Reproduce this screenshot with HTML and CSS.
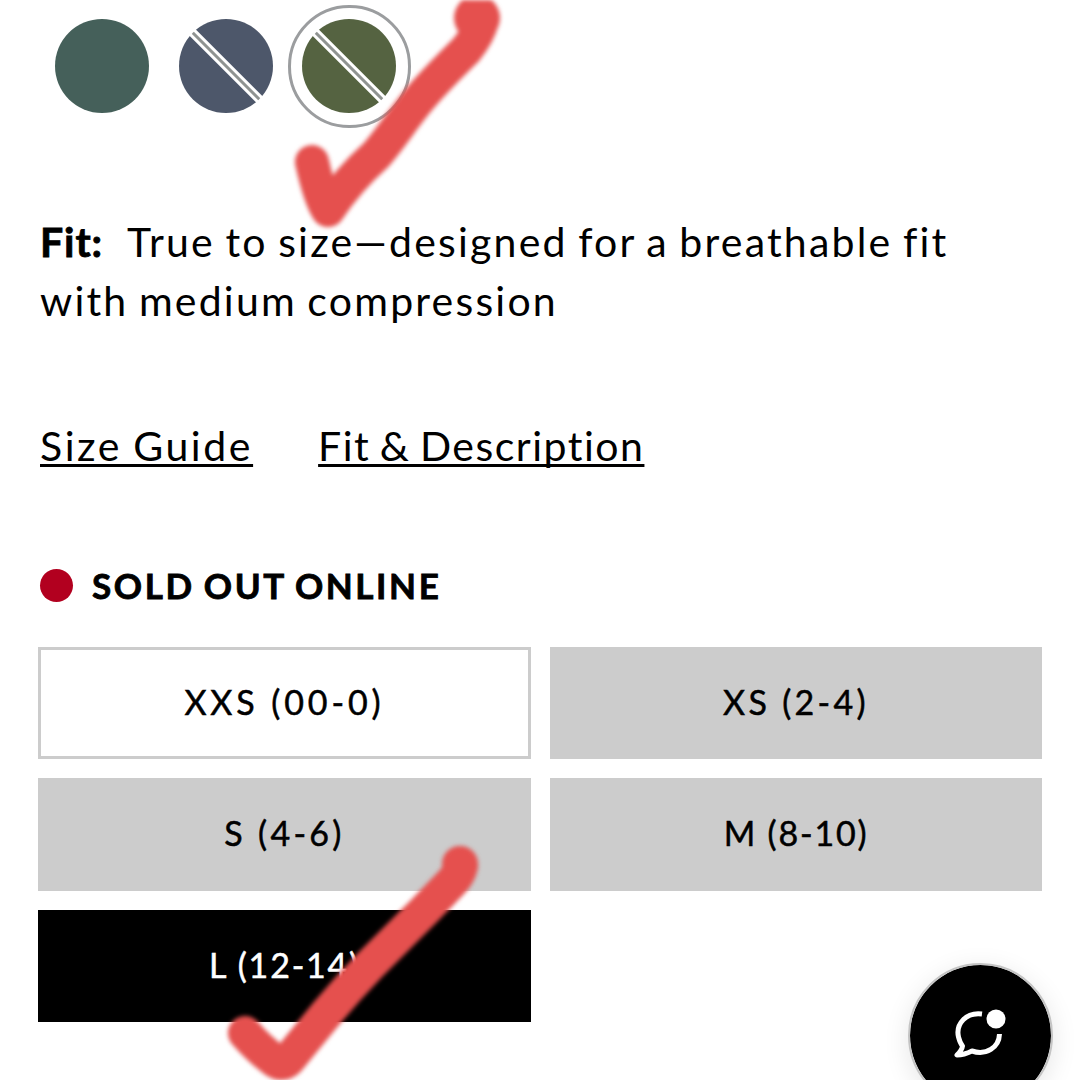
FILE: index.html
```html
<!DOCTYPE html>
<html lang="en">
<head>
  <meta charset="UTF-8">
  <meta name="viewport" content="width=device-width, initial-scale=1.0">
  <title>Product options</title>
  <link rel="stylesheet" href="styles.css">
</head>
<body>
  <main class="product">
    <div class="swatches">
      <button class="swatch" aria-label="Teal"><span class="color teal"></span></button>
      <button class="swatch" aria-label="Slate"><span class="color slate sold-out"></span></button>
      <button class="swatch selected" aria-label="Olive"><span class="color olive sold-out"></span></button>
    </div>

    <p class="fit"><strong>Fit:</strong>True to size—designed for a breathable fit<br>with medium compression</p>

    <nav class="links">
      <a href="#" class="guide">Size Guide</a>
      <a href="#" class="description">Fit &amp; Description</a>
    </nav>

    <div class="stock">
      <span class="dot"></span>
      <span class="stock-text">SOLD OUT ONLINE</span>
    </div>

    <div class="sizes">
      <button class="size available">XXS (00-0)</button>
      <button class="size small">XS (2-4)</button>
      <button class="size small">S (4-6)</button>
      <button class="size">M (8-10)</button>
      <button class="size active">L (12-14)</button>
    </div>
  </main>

  <!-- Hand drawn check marks -->
  <svg class="marks" viewBox="0 0 1080 1080">
    <path d="M482 20 Q479 34 466 50 C450 66 432 83 416 103 S390 139 376 155 Q348 180 328 210 Q320 198 312 162"/>
    <circle cx="477" cy="18" r="23"/>
    <path d="M461 866 Q459 875 451 883 L425 910 L370 965 Q347 989 326 1014 L290 1058 Q283 1067 274 1060 Q259 1049 245 1033"/>
    <circle cx="460" cy="864" r="18"/>
  </svg>

  <button class="chat" aria-label="Chat">
    <svg viewBox="0 0 52 50">
      <path class="bubble" d="M28 5 C12 3 1.500 15 4.500 28 Q6 34 8.500 37 Q8 41 3 46 Q10 46 18 42 C32 46.500 45 39 45.500 25"/>
      <circle cx="42" cy="10" r="9.500"/>
    </svg>
  </button>
</body>
</html>
```

FILE: styles.css
```css
* {
  box-sizing: border-box;
}
body {
  margin: 0;
  height: 1080px;
  overflow: hidden;
  position: relative;
  background: #fff;
  color: #000;
  font-family: Lato, 'Open Sans', sans-serif;
}
button {
  font-family: inherit;
  margin: 0;
  cursor: pointer;
}
.product {
  padding: 5px 38px 0;
}
.swatches {
  display: flex;
  gap: 1px;
  margin-left: 3px;
}
.swatch {
  display: flex;
  justify-content: center;
  align-items: center;
  width: 122.5px;
  height: 122.5px;
  padding: 0;
  border: 3px solid transparent;
  border-radius: 50%;
  background: none;
}
.swatch.selected {
  border-color: #9b9d9f;
}
.color {
  width: 94px;
  height: 94px;
  border-radius: 50%;
}
.teal {
  background: #45605a;
}
.slate {
  --shade: #4d576a;
}
.olive {
  --shade: #556341;
}
/* Diagonal strike for colors that are not available */
.sold-out {
  background: linear-gradient(45deg, var(--shade) calc(50% - 5px), #fff calc(50% - 4px), #fff calc(50% - 2px), #8f9391 calc(50% - 1px), #8f9391 calc(50% + 1px), #fff calc(50% + 2px), #fff calc(50% + 4px), var(--shade) calc(50% + 5px));
}
.fit {
  margin: 84.5px 0 0 2px;
  font-size: 41px;
  line-height: 59px;
  letter-spacing: 2.2px;
  word-spacing: -2.2px;
  white-space: nowrap;
}
.fit strong {
  margin-right: 24px;
  letter-spacing: 0.9px;
  -webkit-text-stroke: 0.8px currentColor;
}
.links {
  display: flex;
  gap: 65px;
  margin: 86px 0 0 2px;
  font-size: 41px;
  line-height: 59px;
}
.links a {
  color: inherit;
  text-decoration: underline;
  text-decoration-thickness: 3px;
  text-underline-offset: 3px;
  text-decoration-skip-ink: none;
}
.guide {
  letter-spacing: 2.6px;
  word-spacing: -2px;
}
.description {
  letter-spacing: 1.5px;
  word-spacing: -2.5px;
}
.stock {
  display: flex;
  align-items: center;
  gap: 19px;
  height: 60px;
  margin: 80.5px 0 0 2px;
}
.dot {
  width: 33px;
  height: 33px;
  border-radius: 50%;
  background: #b2001f;
}
.stock-text {
  padding-bottom: 2px;
  font-size: 35px;
  font-weight: bold;
  letter-spacing: 2.6px;
  word-spacing: -2px;
  -webkit-text-stroke: 0.8px currentColor;
}
.sizes {
  display: grid;
  grid-template-columns: 493px 492px;
  grid-auto-rows: 112.6px;
  gap: 19px;
  margin-top: 31px;
}
.size {
  padding: 0 0 3px;
  border: 3px solid #ccc;
  background: #ccc;
  color: #000;
  font-size: 34px;
  letter-spacing: 1.8px;
  -webkit-text-stroke: 0.5px currentColor;
}
.size.small {
  letter-spacing: 3.3px;
}
.size.available {
  background: #fff;
  letter-spacing: 3.9px;
}
.size.active {
  border-color: #000;
  background: #000;
  color: #fff;
}
.marks {
  position: absolute;
  top: 0;
  left: 0;
  width: 1080px;
  height: 1080px;
  fill: #e5504e;
  filter: blur(2px);
  pointer-events: none;
}
.marks path {
  fill: none;
  stroke: #e5504e;
  stroke-width: 34;
  stroke-linecap: round;
  stroke-linejoin: round;
}
/* Floating chat button, cut off by the bottom edge */
.chat {
  position: absolute;
  top: 963px;
  left: 908px;
  display: flex;
  justify-content: center;
  align-items: center;
  width: 145px;
  height: 145px;
  padding: 0 1px 4px 0;
  border: 2px solid #c4c4c4;
  border-radius: 50%;
  background: #000;
  background-clip: padding-box;
  box-shadow: 0 6px 26px rgba(0, 0, 0, 0.1);
}
.chat svg {
  width: 52px;
  height: 50px;
  fill: #fff;
}
.bubble {
  fill: none;
  stroke: #fff;
  stroke-width: 5;
  stroke-linejoin: round;
}
```
